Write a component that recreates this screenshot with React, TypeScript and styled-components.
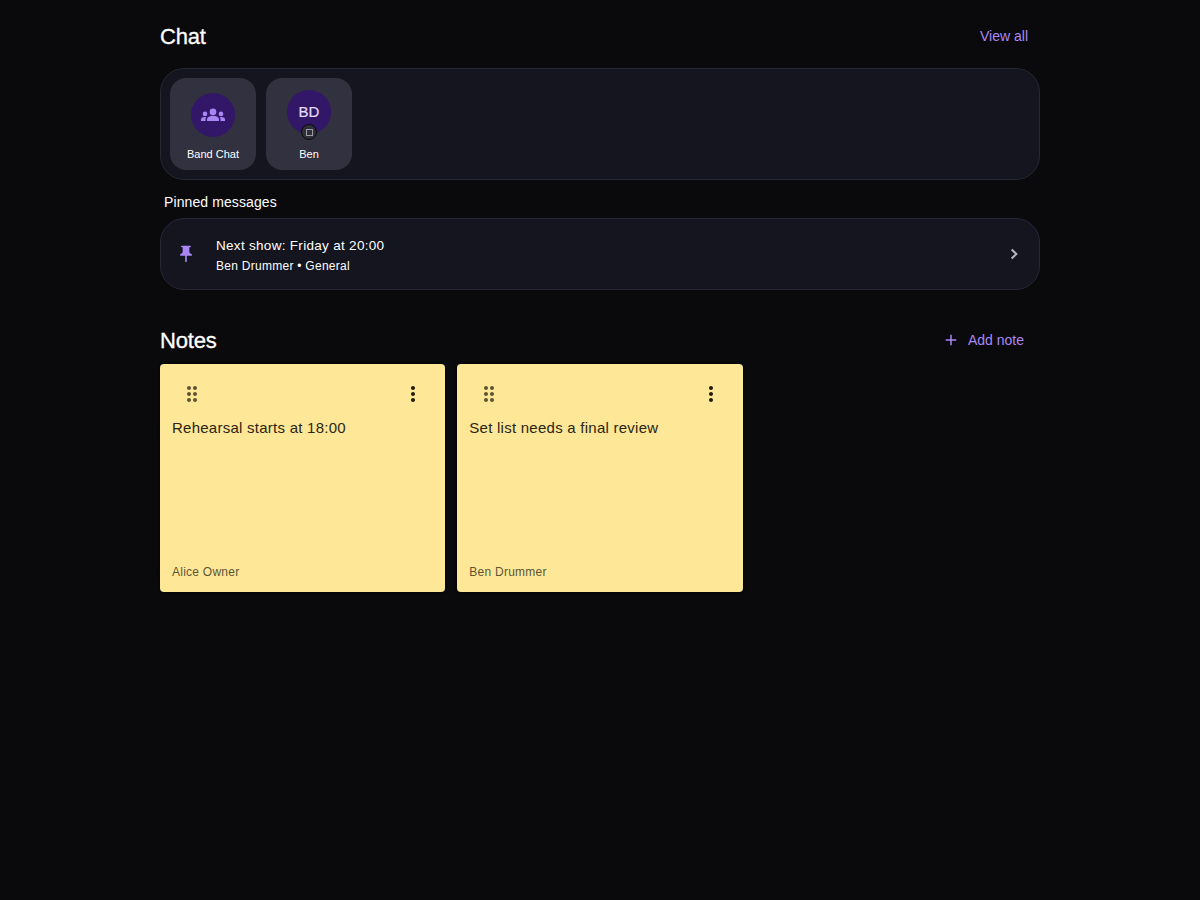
import styled, { createGlobalStyle } from 'styled-components';
import { MdAdd, MdDragIndicator, MdMoreVert, MdPushPin } from 'react-icons/md';

const GlobalStyle = createGlobalStyle`
  html, body {
    margin: 0;
    background: #0a0a0d;
    color: #fff;
    font-family: "Liberation Sans", Arial, sans-serif;
  }
`;

const Page = styled.div`
  width: 880px;
  min-height: 900px;
  margin: 0 auto;
  display: flex;
  flex-direction: column;
`;

const SectionHeader = styled.div`
  display: flex;
  align-items: center;
  justify-content: space-between;
  height: 36px;
`;

const ChatHeader = styled(SectionHeader)`
  margin-top: 18px;
  margin-bottom: 14px;
`;

const Title = styled.h2`
  margin: 0;
  padding-top: 1px;
  font-size: 22px;
  font-weight: 400;
  letter-spacing: -0.2px;
  -webkit-text-stroke: 0.3px #fff;
`;

const TextButton = styled.button<{ $right: number }>`
  display: flex;
  align-items: center;
  gap: 8px;
  padding: 0 ${(p) => p.$right}px 0 0;
  border: 0;
  background: none;
  color: #a887f5;
  font: inherit;
  font-size: 14px;
  cursor: pointer;

  svg {
    font-size: 18px;
  }
`;

const Panel = styled.div`
  box-sizing: border-box;
  border: 1px solid #262733;
  border-radius: 24px;
  background: #14151e;
`;

const ChatPanel = styled(Panel)`
  display: flex;
  gap: 10px;
  height: 112px;
  padding: 9px;
`;

const ChatTile = styled.div`
  width: 86px;
  height: 92px;
  border-radius: 16px;
  background: #31313f;
  display: flex;
  flex-direction: column;
  align-items: center;
`;

const Avatar = styled.div<{ $top: number }>`
  position: relative;
  width: 44px;
  height: 44px;
  margin-top: ${(p) => p.$top}px;
  border-radius: 50%;
  background: #321668;
  color: #e6dcff;
  display: flex;
  align-items: center;
  justify-content: center;
  font-size: 15px;
`;

const GroupsSvg = styled.svg`
  width: 24px;
  height: 24px;
  fill: #a887f5;
`;

const Initials = styled.span`
  margin-top: -2px;
  -webkit-text-stroke: 0.2px #e6dcff;
`;

const StatusBadge = styled.span`
  position: absolute;
  left: 14px;
  bottom: -6px;
  box-sizing: border-box;
  width: 16px;
  height: 16px;
  border: 1.5px solid #08090c;
  border-radius: 50%;
  background: #2f2f38;
  display: flex;
  align-items: center;
  justify-content: center;

  &::after {
    content: '';
    box-sizing: border-box;
    width: 7px;
    height: 7px;
    border: 1px solid #9d9ba8;
  }
`;

const TileLabel = styled.span<{ $top: number }>`
  margin-top: ${(p) => p.$top}px;
  font-size: 11px;
  line-height: 14px;
  color: #fff;
`;

const SubHeading = styled.div`
  margin: 13px 0 7px 4px;
  font-size: 14px;
  line-height: 18px;
  letter-spacing: 0.1px;
`;

const PinnedRow = styled(Panel)`
  display: flex;
  align-items: center;
  height: 72px;
  padding: 0 15px;
`;

const PinIcon = styled(MdPushPin)`
  font-size: 20px;
  color: #a887f5;
  flex: none;
`;

const PinnedText = styled.div`
  flex: 1;
  margin-left: 20px;
  padding-top: 2px;
  display: flex;
  flex-direction: column;
  gap: 3px;
`;

const PinnedTitle = styled.div`
  font-size: 13.5px;
  line-height: 18px;
  letter-spacing: 0.3px;
`;

const PinnedMeta = styled.div`
  font-size: 12px;
  line-height: 16px;
  letter-spacing: 0.27px;
`;

const ChevronSvg = styled.svg`
  width: 20px;
  height: 20px;
  fill: none;
  stroke: #b5b3c0;
  stroke-width: 2.5;
`;

const NotesHeader = styled(SectionHeader)`
  margin-top: 32px;
  margin-bottom: 6px;
`;

const NotesGrid = styled.div`
  display: grid;
  grid-template-columns: repeat(3, 1fr);
  gap: 12px;
`;

const NoteCard = styled.div`
  box-sizing: border-box;
  height: 228px;
  padding: 0 12px 12px;
  border-radius: 4px;
  background: #fee898;
  box-shadow: 0 0 3px #000;
  color: #2b2412;
  display: flex;
  flex-direction: column;
`;

const NoteTools = styled.div`
  display: flex;
  align-items: center;
  justify-content: space-between;
  height: 60px;
  padding: 0 8px;
  flex: none;
  margin-bottom: -6px;
`;

const DragHandle = styled(MdDragIndicator)`
  font-size: 24px;
  color: #5e5534;
`;

const MoreButton = styled(MdMoreVert)`
  font-size: 24px;
  color: #221c0c;
`;

const NoteText = styled.div`
  flex: 1;
  font-size: 15px;
  line-height: 20px;
  letter-spacing: 0.25px;
`;

const NoteAuthor = styled.div`
  font-size: 12px;
  line-height: 16px;
  letter-spacing: 0.25px;
  color: #5e5534;
`;

const GroupsIcon = () => (
  <GroupsSvg viewBox="0 0 24 24">
    <circle cx="12" cy="8.9" r="3.3" />
    <circle cx="4" cy="10.9" r="2.3" />
    <circle cx="20" cy="10.9" r="2.3" />
    <path d="M6 18v-1.6c0-1.2.7-2.3 1.8-2.75 1.2-.5 2.6-.9 4.2-.9s3 .4 4.2.9c1.1.45 1.8 1.55 1.8 2.75V18z" />
    <path d="M5.1 14.1c-.4.7-.6 1.5-.6 2.3V18H0v-1.6c0-.8.5-1.5 1.2-1.85C2.1 14.2 3 14 4 14c.4 0 .75.04 1.1.1z" />
    <path d="M18.9 14.1c.4.7.6 1.5.6 2.3V18H24v-1.6c0-.8-.5-1.5-1.2-1.85C21.9 14.2 21 14 20 14c-.4 0-.75.04-1.1.1z" />
  </GroupsSvg>
);

const notes = [
  { text: 'Rehearsal starts at 18:00', author: 'Alice Owner' },
  { text: 'Set list needs a final review', author: 'Ben Drummer' },
];

export default function App() {
  return (
    <>
      <GlobalStyle />
      <Page>
        <ChatHeader>
          <Title>Chat</Title>
          <TextButton $right={12}>View all</TextButton>
        </ChatHeader>
        <ChatPanel>
          <ChatTile>
            <Avatar $top={15}>
              <GroupsIcon />
            </Avatar>
            <TileLabel $top={10}>Band Chat</TileLabel>
          </ChatTile>
          <ChatTile>
            <Avatar $top={12}>
              <Initials>BD</Initials>
              <StatusBadge />
            </Avatar>
            <TileLabel $top={13}>Ben</TileLabel>
          </ChatTile>
        </ChatPanel>
        <SubHeading>Pinned messages</SubHeading>
        <PinnedRow>
          <PinIcon />
          <PinnedText>
            <PinnedTitle>Next show: Friday at 20:00</PinnedTitle>
            <PinnedMeta>Ben Drummer • General</PinnedMeta>
          </PinnedText>
          <ChevronSvg viewBox="0 0 24 24">
            <polyline points="9.2,6.5 14.8,12 9.2,17.5" />
          </ChevronSvg>
        </PinnedRow>
        <NotesHeader>
          <Title>Notes</Title>
          <TextButton $right={16}>
            <MdAdd />
            Add note
          </TextButton>
        </NotesHeader>
        <NotesGrid>
          {notes.map((note) => (
            <NoteCard key={note.text}>
              <NoteTools>
                <DragHandle />
                <MoreButton />
              </NoteTools>
              <NoteText>{note.text}</NoteText>
              <NoteAuthor>{note.author}</NoteAuthor>
            </NoteCard>
          ))}
        </NotesGrid>
      </Page>
    </>
  );
}
